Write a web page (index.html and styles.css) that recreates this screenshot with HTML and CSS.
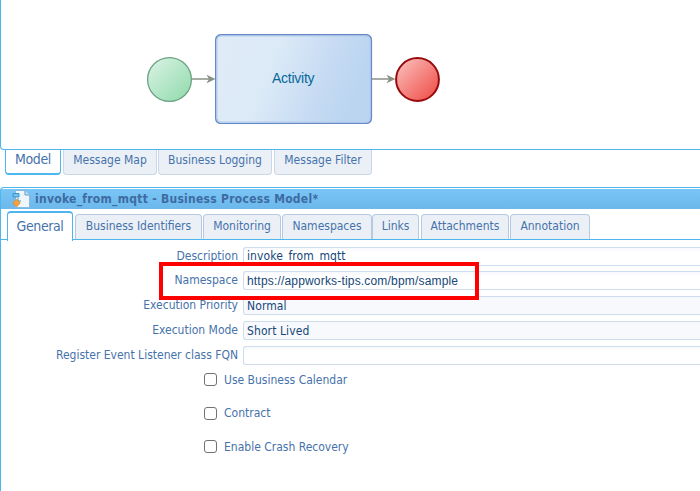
FILE: index.html
```
<!DOCTYPE html>
<html lang="en">
<head>
<meta charset="utf-8">
<title>Business Process Model</title>
<link rel="stylesheet" href="styles.css">
</head>
<body>
<main class="app">
  <section class="canvas">
    <svg class="diagram" width="300" height="96" viewBox="144 31 300 96">
      <defs>
        <linearGradient id="start" x1="0" y1="0" x2="1" y2="1"><stop offset="0.1" stop-color="#d5f1e0"/><stop offset="0.9" stop-color="#96dcb0"/></linearGradient>
        <linearGradient id="end" x1="0" y1="0" x2="1" y2="1"><stop offset="0.1" stop-color="#fab8b5"/><stop offset="0.9" stop-color="#f0534e"/></linearGradient>
        <linearGradient id="task" gradientUnits="userSpaceOnUse" x1="228" y1="45" x2="355" y2="95"><stop offset="0" stop-color="#dfebf7"/><stop offset="0.35" stop-color="#dceaf7"/><stop offset="0.7" stop-color="#c8dcf3"/><stop offset="1" stop-color="#bbd5f0"/></linearGradient>
      </defs>
      <path d="M192 79H212M372 79H392" stroke="#a7ada4" stroke-width="2"/>
      <path d="M206.500 74.800L215.500 79L206.500 83.200L209 79ZM386.500 74.800L395.500 79L386.500 83.200L389 79Z" fill="#899184"/>
      <circle cx="169.500" cy="79.500" r="21.900" fill="url(#start)" stroke="#6ba483" stroke-width="1.300"/>
      <rect x="215.700" y="34.700" width="155.700" height="88.700" rx="5" fill="url(#task)" stroke="#6688c6" stroke-width="1.400"/>
      <rect x="217" y="36" width="153" height="86" rx="4" fill="none" stroke="#b4cdec"/>
      <circle cx="417.500" cy="79.500" r="21.400" fill="url(#end)" stroke="#990a0d" stroke-width="2"/>
      <text class="task-name" x="272" y="83" textLength="42.500">Activity</text>
    </svg>
  </section>
  <nav class="tabs tabs-bottom">
    <span class="tab active w-model">Model</span>
    <span class="tab w-map">Message Map</span>
    <span class="tab w-logging">Business Logging</span>
    <span class="tab w-filter">Message Filter</span>
  </nav>
  <section class="panel">
    <header class="title">
      <svg width="18" height="18" viewBox="0 0 18 18">
        <path d="M3.500 .5H13L17.500 5V17.500H3.500Z" fill="#eef6fc" stroke="#8bb9dc"/>
        <path d="M13 .5V5H17.500" fill="#c3dff4" stroke="#5e9fce"/>
        <path d="M1 3.500H7V7H1Z" fill="#74c3ef" stroke="#3894cd"/>
        <path d="M6 8V11H9" fill="none" stroke="#4b9ccc"/>
        <path d="M4.500 9L8.300 13L4.500 17L.7 13Z" fill="#f4a23a" stroke="#d28732" stroke-width=".7"/>
      </svg>
      <span class="title-text">invoke_from_mqtt - Business Process Model*</span>
    </header>
    <nav class="tabs tabs-top">
      <span class="tab active w-general">General</span>
      <span class="tab w-ids">Business Identifiers</span>
      <span class="tab w-monitoring">Monitoring</span>
      <span class="tab w-namespaces">Namespaces</span>
      <span class="tab w-links">Links</span>
      <span class="tab w-attachments">Attachments</span>
      <span class="tab w-annotation">Annotation</span>
    </nav>
    <div class="form">
      <label class="row"><span class="label">Description</span><span class="field">invoke_from_mqtt</span></label>
      <label class="row"><span class="label">Namespace</span><span class="field url">https://appworks-tips.com/bpm/sample</span></label>
      <label class="row"><span class="label">Execution Priority</span><span class="field select">Normal</span></label>
      <label class="row"><span class="label">Execution Mode</span><span class="field select">Short Lived</span></label>
      <label class="row"><span class="label">Register Event Listener class FQN</span><span class="field"></span></label>
    </div>
    <div class="checks">
      <label class="check"><span class="box"></span>Use Business Calendar</label>
      <label class="check"><span class="box"></span>Contract</label>
      <label class="check"><span class="box"></span>Enable Crash Recovery</label>
    </div>
  </section>
  <div class="highlight"></div>
</main>
</body>
</html>
```
FILE: styles.css
```
* { box-sizing: border-box; }
body { margin: 0; background: #fff; }
.app {
  position: relative;
  width: 700px;
  height: 491px;
  overflow: hidden;
  font: 12px/16px "DejaVu Sans Condensed", "DejaVu Sans", sans-serif;
  font-stretch: condensed;
  color: #4672aa;
  white-space: nowrap;
}
.canvas {
  height: 150px;
  padding: 31px 0 0 143px;
  border-left: 1px solid #4db6ee;
  border-bottom: 1px solid #4db6ee;
  border-bottom-left-radius: 4px;
}
.diagram { display: block; }
.task-name { font: 14px "Liberation Sans", sans-serif; fill: #086799; }
.tabs { display: flex; }
.tab {
  flex: none;
  text-align: center;
  background: #ebf0f7;
  border: 1px solid #b7c9e1;
}
.tabs-bottom { height: 37px; padding-left: 5px; gap: 2px; }
.tabs-bottom .tab {
  height: 25px;
  padding-top: 2px;
  border-top: 0;
  border-color: #cad7e9;
  border-radius: 0 0 4px 4px;
}
.tabs-bottom .active, .tabs-top .active {
  background: #fff;
  border-color: #4db6ee;
  font-size: 14px;
  letter-spacing: -.4px;
}
.tabs-bottom .active {
  height: 25px;
  padding-top: 1px;
  border-bottom-width: 2px;
}
.w-model { width: 56px; }
.w-map { width: 94px; }
.w-logging { width: 114px; margin-left: -1px; }
.w-filter { width: 98px; }
.panel {
  height: 304px;
  border-top: 1px solid #4db6ee;
  border-left: 1px solid #4db6ee;
  border-top-left-radius: 4px;
}
.title {
  display: flex;
  align-items: center;
  height: 20px;
  margin-top: 1px;
  padding-left: 11px;
  gap: 5px;
  background: linear-gradient(#79c5f6, #6cb8eb);
  color: #3d6ba2;
  font-weight: bold;
  letter-spacing: .27px;
}
.tabs-top {
  align-items: flex-end;
  height: 31px;
  padding-left: 6px;
  border-bottom: 1px solid #4db6ee;
  gap: 1px;
}
.tabs-top .tab {
  height: 25px;
  padding-top: 3px;
  border-bottom: 0;
  border-radius: 4px 4px 0 0;
}
.tabs-top .active {
  height: 30px;
  margin-bottom: -2px;
  padding-top: 5px;
  border-top-width: 2px;
}
.w-general { width: 66px; }
.w-ids { width: 127px; margin-left: 1px; }
.w-monitoring { width: 78px; }
.w-namespaces { width: 90px; }
.tabs-top .w-links { width: 47px; margin-left: -1px; }
.w-attachments { width: 88px; margin-left: 1px; }
.w-annotation { width: 80px; }
.form { padding-top: 7px; }
.row { display: flex; height: 25px; }
.row:first-child { height: 24px; }
.label {
  width: 237px;
  margin-right: 5px;
  text-align: right;
  padding-top: 1px;
}
.field {
  flex: 1;
  height: 19px;
  padding: 1px 3px;
  border: 1px solid #cddded;
  border-right: 0;
  border-radius: 3px 0 0 3px;
  background: linear-gradient(#f8f9fc, #fff 5px);
  color: #154777;
  letter-spacing: .1px;
}
.row:first-child .field { padding-top: 0; }
.field.select { background: #f8f9fd; }
.field.url { font: 12px/17px "Liberation Sans", sans-serif; letter-spacing: .18px; }
.checks { padding-left: 203px; }
.check { display: flex; align-items: center; height: 17px; margin-bottom: 16.5px; gap: 7px; }
.box {
  width: 13px;
  height: 13px;
  border: 1px solid #727272;
  border-radius: 3px;
}
.highlight {
  position: absolute;
  left: 159px;
  top: 262px;
  width: 320px;
  height: 38px;
  border: 4px solid #f00;
}
```
